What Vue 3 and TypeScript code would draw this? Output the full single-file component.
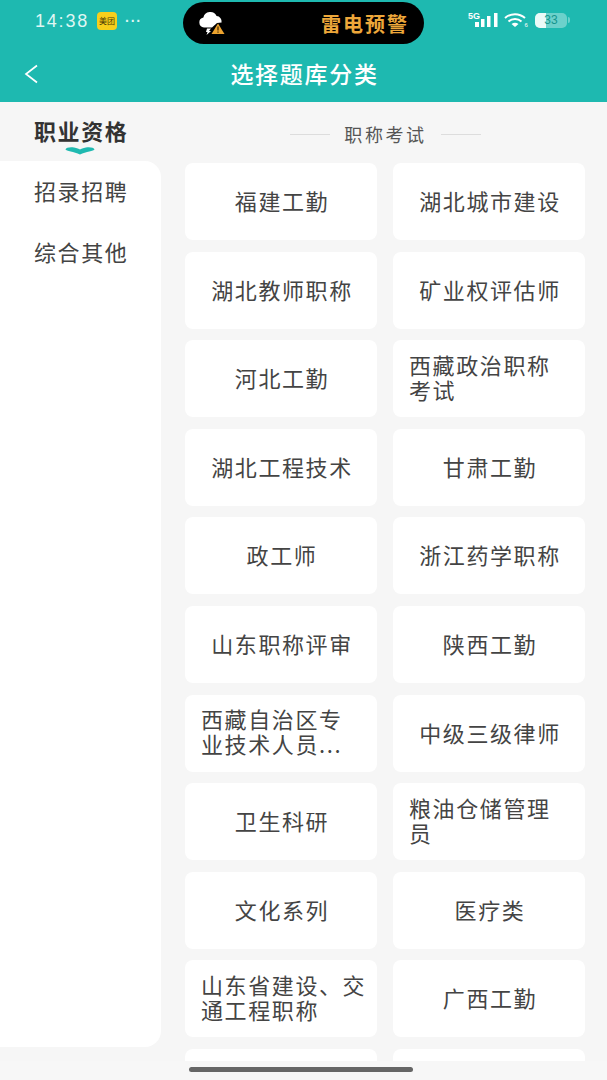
<script setup lang="ts">
const rows: [string, string][] = [
  ['福建工勤', '湖北城市建设'],
  ['湖北教师职称', '矿业权评估师'],
  ['河北工勤', '西藏政治职称\n考试'],
  ['湖北工程技术', '甘肃工勤'],
  ['政工师', '浙江药学职称'],
  ['山东职称评审', '陕西工勤'],
  ['西藏自治区专\n业技术人员...', '中级三级律师'],
  ['卫生科研', '粮油仓储管理\n员'],
  ['文化系列', '医疗类'],
  ['山东省建设、交\n通工程职称', '广西工勤'],
  ['', ''],
]
const items = rows.flat()
</script>

<template>
  <div class="page">
    <header class="head">
      <div class="status">
        <div class="status-left">
          <span class="time">14:38</span>
          <span class="mt">美团</span>
          <span class="dots">···</span>
        </div>
        <div class="island">
          <svg class="storm" width="28" height="25" viewBox="0 0 28 25">
            <path d="M6 16.500a5 5 0 0 1-.6-9.900A7 7 0 0 1 18.600 5a5.500 5.500 0 0 1 5 6.500L19 12l-5 4.500z" fill="#fff" />
            <path d="M9 17.500h4l-2 2.500h2l-4.500 4 1-3H8z" fill="#fff" />
            <path d="M20 12.500l6.500 10.500H13.500z" fill="#eda32e" />
            <rect x="19.400" y="15.500" width="1.200" height="4" fill="#3b2a08" />
            <rect x="19.400" y="20.500" width="1.200" height="1.200" fill="#3b2a08" />
          </svg>
          <span class="alert">雷电预警</span>
        </div>
        <div class="status-right">
          <svg width="30" height="16" viewBox="0 0 30 16">
            <text x="0" y="6.500" class="fiveg">5G</text>
            <rect x="7" y="10" width="4" height="5" fill="#fff" />
            <rect x="13" y="7" width="3.500" height="8" fill="#fff" />
            <rect x="19" y="4" width="3.500" height="11" fill="#fff" />
            <rect x="26" y="1" width="3.500" height="14" fill="#fff" />
          </svg>
          <svg width="25" height="16" viewBox="0 0 25 16">
            <path d="M1 6a15 15 0 0 1 20 0M4.500 9.500a10 10 0 0 1 13 0" fill="none" stroke="#fff" stroke-width="2" />
            <path d="M7.500 12a6 6 0 0 1 7 0l-3.500 3z" fill="#fff" />
            <text x="20.500" y="15" class="six">6</text>
          </svg>
          <div class="battery">
            <div class="cell-body"><span class="level"></span><span class="num">33</span></div>
            <span class="tip"></span>
          </div>
        </div>
      </div>
      <div class="nav">
        <svg class="back" width="15" height="20" viewBox="0 0 15 20">
          <path d="M13 1.500 2 10l11 8.500" fill="none" stroke="#fff" stroke-width="1.700" />
        </svg>
        <span class="title">选择题库分类</span>
      </div>
    </header>

    <main class="body">
      <aside class="side">
        <div class="active-tab">
          <span>职业资格</span>
          <svg class="wave" width="30" height="8" viewBox="0 0 30 8">
            <path d="M0.500 2.500C1 0.500 5 0 9 0.500 12 1 14 2 15 2.500 16 2 18 1 21 0.500 25 0 29 0.500 29.500 2.500 29 4 21 4.500 15 7.500 9 4.500 1 4 0.500 2.500z" fill="#1fb9b0" />
          </svg>
        </div>
        <div class="side-card">
          <div class="side-item">招录招聘</div>
          <div class="side-item">综合其他</div>
        </div>
      </aside>

      <section class="content">
        <div class="section-title">
          <i></i><span>职称考试</span><i></i>
        </div>
        <div class="grid">
          <div v-for="(t, i) in items" :key="i" class="cell" :class="{ long: t.includes('\n') }">{{ t }}</div>
        </div>
      </section>
    </main>

    <div class="home-zone"><span class="home"></span></div>
  </div>
</template>

<style>
html, body { margin: 0; background: #f6f6f6; }
</style>

<style scoped>
.page {
  width: 607px;
  height: 1080px;
  overflow: hidden;
  position: relative;
  background: #f6f6f6;
  font-family: "Noto Sans CJK SC", "Liberation Sans", sans-serif;
  color: #444;
}
.head {
  height: 102px;
  background: #1eb9b0;
  color: #fff;
  box-sizing: border-box;
}
.status {
  height: 46px;
  padding: 0 37px 0 35px;
  display: flex;
  align-items: center;
  box-sizing: border-box;
}
.status-left {
  width: 148px;
  display: flex;
  align-items: center;
  gap: 8px;
  margin-top: -4px;
}
.time {
  font-family: "Liberation Sans", sans-serif;
  font-size: 18px;
  letter-spacing: 1.800px;
  color: #dff6f3;
}
.mt {
  width: 20px;
  height: 18px;
  line-height: 18px;
  border-radius: 4px;
  background: #f7cf1b;
  color: #4a3a05;
  font-size: 8px;
  text-align: center;
}
.dots {
  font-family: "Liberation Sans", sans-serif;
  font-size: 14px;
  font-weight: 700;
  letter-spacing: 1px;
  color: #dff6f3;
}
.island {
  width: 241px;
  height: 42px;
  border-radius: 21px;
  background: #000;
  display: flex;
  align-items: center;
  justify-content: space-between;
  padding: 0 15px 0 15px;
  box-sizing: border-box;
}
.alert {
  color: #eda73a;
  font-size: 20px;
  font-weight: 700;
  letter-spacing: 2px;
}
.status-right {
  margin-left: auto;
  margin-top: -6px;
  display: flex;
  align-items: center;
  gap: 6px;
}
.fiveg {
  fill: #fff;
  font-family: "Liberation Sans", sans-serif;
  font-size: 9px;
  font-weight: 700;
}
.six {
  fill: #fff;
  font-family: "Liberation Sans", sans-serif;
  font-size: 6px;
}
.battery {
  display: flex;
  align-items: center;
  gap: 1px;
}
.cell-body {
  position: relative;
  width: 32px;
  height: 15px;
  border-radius: 5px;
  background: rgba(255, 255, 255, 0.35);
  overflow: hidden;
}
.tip {
  width: 2px;
  height: 6px;
  border-radius: 0 2px 2px 0;
  background: rgba(255, 255, 255, 0.35);
}
.level {
  display: block;
  width: 11px;
  height: 100%;
  background: #eafaf8;
}
.num {
  position: absolute;
  inset: 0;
  font-family: "Liberation Sans", sans-serif;
  font-size: 12px;
  line-height: 15px;
  text-align: center;
  color: #15958d;
}
.nav {
  height: 56px;
  position: relative;
  display: flex;
  align-items: center;
  justify-content: center;
}
.back {
  position: absolute;
  left: 24px;
  top: 18px;
}
.title {
  font-size: 23px;
  line-height: 30px;
  font-weight: 500;
  letter-spacing: 1.700px;
  padding: 0 0 2px 2px;
}
.body {
  display: flex;
  height: 958px;
}
.side {
  width: 161px;
  flex: none;
  display: flex;
  flex-direction: column;
}
.active-tab {
  height: 59px;
  box-sizing: border-box;
  padding-top: 14px;
  padding-left: 34px;
  font-size: 22px;
  font-weight: 700;
  line-height: 28px;
  letter-spacing: 1.600px;
  color: #333;
  position: relative;
}
.wave {
  position: absolute;
  left: 65px;
  top: 45px;
}
.side-card {
  height: 886px;
  background: #fff;
  border-radius: 0 16px 16px 0;
}
.side-item {
  height: 61px;
  box-sizing: border-box;
  padding: 15px 0 0 34px;
  font-size: 22px;
  line-height: 28px;
  letter-spacing: 1.600px;
}
.content {
  width: 400px;
  margin-left: 24px;
  flex: none;
}
.section-title {
  height: 61px;
  box-sizing: border-box;
  padding-top: 19px;
  display: flex;
  align-items: flex-start;
  justify-content: center;
  gap: 14px;
  font-size: 18px;
  line-height: 26px;
  letter-spacing: 2.600px;
  color: #555;
  width: 401px;
}
.section-title i {
  display: block;
  width: 40px;
  height: 1px;
  margin-top: 13px;
  background: #ddd;
}
.grid {
  display: grid;
  grid-template-columns: 192px 192px;
  grid-auto-rows: 77px;
  column-gap: 16px;
  row-gap: 11.600px;
}
.cell {
  background: #fff;
  border-radius: 8px;
  display: flex;
  align-items: center;
  justify-content: center;
  text-align: center;
  box-sizing: border-box;
  padding: 0 14px 2px 16px;
  font-size: 22px;
  line-height: 25px;
  letter-spacing: 1.600px;
  white-space: pre-line;
}
.cell.long {
  justify-content: flex-start;
  text-align: left;
  padding-right: 4px;
  padding-bottom: 4px;
}
.home-zone {
  position: absolute;
  left: 0;
  right: 0;
  bottom: 0;
  height: 19px;
  background: #f7f7f7;
}
.home {
  position: absolute;
  left: 189px;
  top: 6px;
  width: 224px;
  height: 5px;
  border-radius: 3px;
  background: #666;
}
</style>
